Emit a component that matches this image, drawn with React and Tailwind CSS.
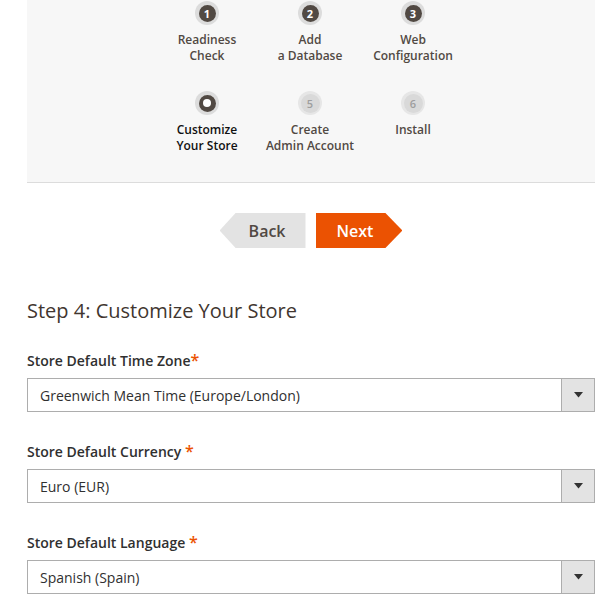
import React from "react";

const font = { fontFamily: '"Open Sans", "Noto Sans", sans-serif' };

function Circle({ state, n }) {
  if (state === "done") {
    return (
      <div className="w-[24px] h-[24px] rounded-full bg-[#dcdcdc] flex items-center justify-center">
        <div className="w-[17px] h-[17px] rounded-full bg-[#514943] flex items-center justify-center text-white text-[11px] font-bold leading-none">
          {n}
        </div>
      </div>
    );
  }
  if (state === "current") {
    return (
      <div className="w-[24px] h-[24px] rounded-full bg-[#dcdcdc] flex items-center justify-center">
        <div className="w-[17px] h-[17px] rounded-full bg-[#514943] flex items-center justify-center">
          <div className="w-[8px] h-[8px] rounded-full bg-white" />
        </div>
      </div>
    );
  }
  return (
    <div className="w-[24px] h-[24px] rounded-full bg-[#e6e6e6] flex items-center justify-center">
      <div className="w-[19px] h-[19px] rounded-full bg-[#d9d9d9] flex items-center justify-center text-[#9e9e9e] text-[11px] font-semibold leading-none">
        {n}
      </div>
    </div>
  );
}

function Step({ state, n, lines }) {
  return (
    <div className="w-[103px] flex flex-col items-center">
      <Circle state={state} n={n} />
      <div
        className={
          "mt-[7px] text-center text-[12px] leading-[16px] font-semibold " +
          (state === "current" ? "text-[#111]" : "text-[#514943]")
        }
      >
        {lines.map((l, i) => (
          <div key={i}>{l}</div>
        ))}
      </div>
    </div>
  );
}

function Select({ value }) {
  return (
    <div className="flex h-[34px] border border-[#adadad] bg-white">
      <div className="flex-1 flex items-center pl-[12px] text-[14px] text-[#303030]">{value}</div>
      <div className="w-[33px] bg-[#e3e3e3] border-l border-[#adadad] flex items-center justify-center">
        <svg width="9" height="6" viewBox="0 0 9 6">
          <path d="M0 0 H9 L4.5 5.5 Z" fill="#333" />
        </svg>
      </div>
    </div>
  );
}

function Field({ label, tight, value, mt }) {
  return (
    <div className={mt}>
      <div className="h-[20px] leading-[20px] text-[14px] font-semibold text-[#303030] mb-[8px]">
        {label}
        {tight ? "" : " "}
        <span className="text-[#eb5202] text-[16px]">*</span>
      </div>
      <Select value={value} />
    </div>
  );
}

export default function App() {
  return (
    <div className="w-[610px] h-[615px] bg-white overflow-hidden" style={font}>
      <div className="ml-[27px] w-[568px]">
        <div className="bg-[#f7f7f7] border-b border-[#dcdcdc] pt-[1px] pb-[28px]">
          <div className="flex justify-center pr-[2px]">
            <Step state="done" n="1" lines={["Readiness", "Check"]} />
            <Step state="done" n="2" lines={["Add", "a Database"]} />
            <Step state="done" n="3" lines={["Web", "Configuration"]} />
          </div>
          <div className="flex justify-center pr-[2px] mt-[27px]">
            <Step state="current" n="4" lines={["Customize", "Your Store"]} />
            <Step state="todo" n="5" lines={["Create", "Admin Account"]} />
            <Step state="todo" n="6" lines={["Install"]} />
          </div>
        </div>

        <div className="flex justify-center gap-[10px] mt-[30px]">
          <div className="h-[35px] flex items-center pl-[29px] pr-[20px] bg-[#e3e3e3] text-[#514943] text-[16px] font-semibold [clip-path:polygon(16px_0,100%_0,100%_100%,16px_100%,0_50%)]">
            Back
          </div>
          <div className="h-[35px] flex items-center pl-[21px] pr-[29px] bg-[#eb5202] text-white text-[16px] font-semibold [clip-path:polygon(0_0,calc(100%-17px)_0,100%_50%,calc(100%-17px)_100%,0_100%)]">
            Next
          </div>
        </div>

        <h2 className="mt-[49px] text-[20px] leading-[28px] text-[#41362f] font-normal">
          Step 4: Customize Your Store
        </h2>

        <Field mt="mt-[25px]" label="Store Default Time Zone" tight value="Greenwich Mean Time (Europe/London)" />
        <Field mt="mt-[29px]" label="Store Default Currency" value="Euro (EUR)" />
        <Field mt="mt-[29px]" label="Store Default Language" value="Spanish (Spain)" />
      </div>
    </div>
  );
}
